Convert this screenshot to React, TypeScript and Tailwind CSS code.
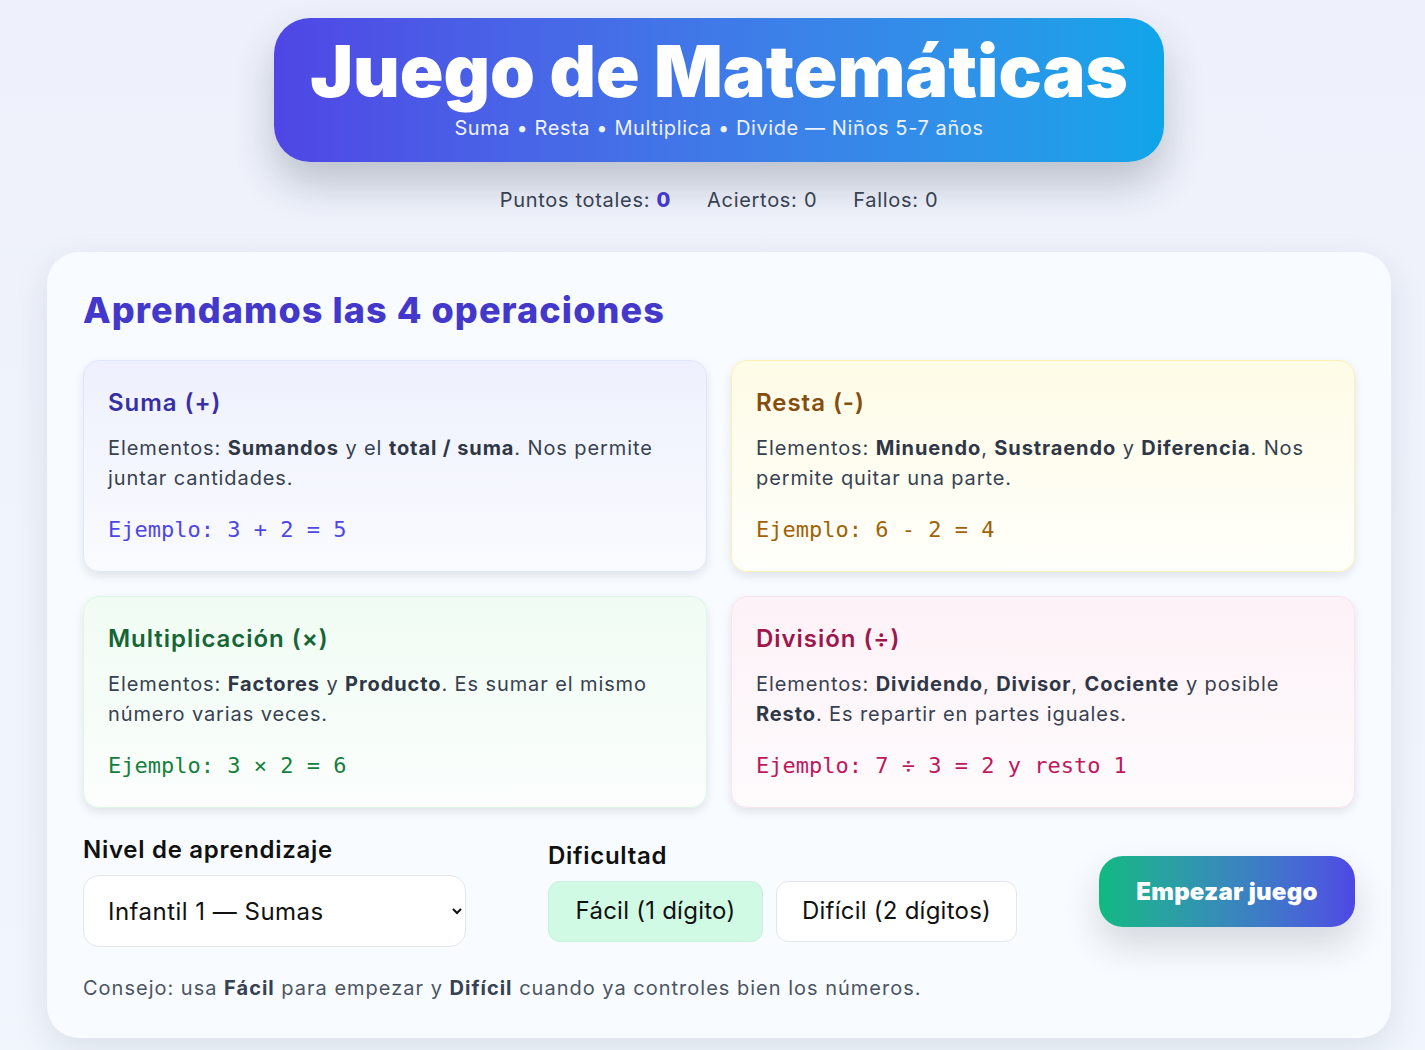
import { useState } from 'react';

type Op = {
  title: string;
  body: React.ReactNode;
  example: string;
  box: string;
  titleColor: string;
  exampleColor: string;
};

const ops: Op[] = [
  {
    title: 'Suma (+)',
    body: (
      <>
        Elementos: <b>Sumandos</b> y el <b>total / suma</b>. Nos permite juntar cantidades.
      </>
    ),
    example: 'Ejemplo: 3 + 2 = 5',
    box: 'bg-gradient-to-b from-[#eef1fd] to-[#fafbff] border-[#e0e6fb]',
    titleColor: 'text-[#3730a3]',
    exampleColor: 'text-[#4f46e5]',
  },
  {
    title: 'Resta (-)',
    body: (
      <>
        Elementos: <b>Minuendo</b>, <b>Sustraendo</b> y <b>Diferencia</b>. Nos permite quitar una parte.
      </>
    ),
    example: 'Ejemplo: 6 - 2 = 4',
    box: 'bg-gradient-to-b from-[#fefbe6] to-[#fffffb] border-[#fcf1b4]',
    titleColor: 'text-[#854d0e]',
    exampleColor: 'text-[#a16207]',
  },
  {
    title: 'Multiplicación (×)',
    body: (
      <>
        Elementos: <b>Factores</b> y <b>Producto</b>. Es sumar el mismo número varias veces.
      </>
    ),
    example: 'Ejemplo: 3 × 2 = 6',
    box: 'bg-gradient-to-b from-[#f0fcf3] to-[#fbfefd] border-[#dcf7e3]',
    titleColor: 'text-[#166534]',
    exampleColor: 'text-[#15803d]',
  },
  {
    title: 'División (÷)',
    body: (
      <>
        Elementos: <b>Dividendo</b>, <b>Divisor</b>, <b>Cociente</b> y posible <b>Resto</b>. Es repartir en
        partes iguales.
      </>
    ),
    example: 'Ejemplo: 7 ÷ 3 = 2 y resto 1',
    box: 'bg-gradient-to-b from-[#fdf2f7] to-[#fefbfd] border-[#fbe3ee]',
    titleColor: 'text-[#9d174d]',
    exampleColor: 'text-[#be185d]',
  },
];

function OpCard({ op }: { op: Op }) {
  return (
    <div className={`border rounded-[16px] px-6 pt-6 pb-[26px] shadow-[0_4px_10px_rgba(15,23,42,0.10)] ${op.box}`}>
      <h3 className={`text-[24px] leading-[36px] font-semibold tracking-[0.04em] ${op.titleColor}`}>{op.title}</h3>
      <p className="mt-3 text-[20px] leading-[30px] tracking-[0.045em] text-[#374151] [&_b]:font-bold [&_b]:text-[#2f3747]">
        {op.body}
      </p>
      <div className={`mt-[22px] text-[22px] leading-[30px] font-['DejaVu_Sans_Mono',monospace] ${op.exampleColor}`}>
        {op.example}
      </div>
    </div>
  );
}

export default function App() {
  const [level, setLevel] = useState('1');
  const [hard, setHard] = useState(false);

  return (
    <div className="min-h-screen bg-gradient-to-b from-[#eef1fb] to-[#f1f6fd] pl-[47px] pr-[34px] pt-[18px] pb-10 font-['Inter',sans-serif] text-[#111827]">
      <div className="flex justify-center">
        <div className="w-[890px] rounded-[36px] bg-gradient-to-r from-[#4f46e5] to-[#0ea5e9] pt-6 pb-5 text-center text-white shadow-[0_22px_40px_rgba(30,41,59,0.24)]">
          <h1 className="text-[72px] leading-[58px] font-black tracking-normal">Juego de Matemáticas</h1>
          <p className="mt-[14px] text-[20px] leading-[28px] tracking-[0.03em] text-[#eef2ff]">
            Suma • Resta • Multiplica • Divide — Niños 5-7 años
          </p>
        </div>
      </div>

      <div className="mt-6 flex justify-center gap-9 text-[20px] leading-[28px] tracking-[0.035em] text-[#374151]">
        <span>
          Puntos totales: <b className="font-extrabold text-[#4338ca]">0</b>
        </span>
        <span>Aciertos: 0</span>
        <span>Fallos: 0</span>
      </div>

      <div className="mt-[38px] rounded-[32px] bg-[#f8fbff] px-9 pt-9 pb-9 shadow-[0_12px_36px_rgba(30,41,59,0.10)]">
        <h2 className="text-[36px] leading-[44px] font-extrabold tracking-[0.03em] text-[#4338ca]">
          Aprendamos las 4 operaciones
        </h2>

        <div className="mt-[28px] grid grid-cols-2 gap-6">
          {ops.map((op) => (
            <OpCard key={op.title} op={op} />
          ))}
        </div>

        <div className="mt-[28px] flex items-center justify-between">
          <div className="w-[383px]">
            <label className="block text-[24px] leading-[28px] font-semibold tracking-[0.03em] text-[#111]">
              Nivel de aprendizaje
            </label>
            <select
              value={level}
              onChange={(e) => setLevel(e.target.value)}
              className="mt-[11px] h-[72px] w-full rounded-[16px] border border-[#e3e6ec] bg-white pl-5 pr-3 text-[24px] tracking-[0.02em] text-[#111]"
            >
              <option value="1">Infantil 1 — Sumas</option>
              <option value="2">Infantil 2 — Restas</option>
              <option value="3">Infantil 3 — Multiplica</option>
              <option value="4">Infantil 4 — Divide</option>
            </select>
          </div>

          <div className="w-[469px]">
            <div className="text-[24px] leading-[28px] font-semibold tracking-[0.03em] text-[#111]">Dificultad</div>
            <div className="mt-[11px] flex gap-[13px]">
              <button
                onClick={() => setHard(false)}
                className={`h-[61px] w-[215px] rounded-[12px] border text-[24px] tracking-[0.01em] text-[#111] ${
                  !hard ? 'bg-[#d1fae5] border-[#c9f0dc]' : 'bg-white border-[#e3e6ec]'
                }`}
              >
                Fácil (1 dígito)
              </button>
              <button
                onClick={() => setHard(true)}
                className={`h-[61px] w-[241px] rounded-[12px] border text-[24px] tracking-[0.01em] text-[#111] ${
                  hard ? 'bg-[#d1fae5] border-[#c9f0dc]' : 'bg-white border-[#e3e6ec]'
                }`}
              >
                Difícil (2 dígitos)
              </button>
            </div>
          </div>

          <button className="h-[71px] w-[256px] rounded-[24px] bg-gradient-to-r from-[#10b981] to-[#4f46e5] text-[24px] font-black tracking-[0.01em] text-white shadow-[0_18px_36px_rgba(30,41,59,0.16)]">
            Empezar juego
          </button>
        </div>

        <p className="mt-[27px] text-[20px] leading-[28px] tracking-[0.05em] text-[#4b5563] [&_b]:font-bold [&_b]:text-[#374151]">
          Consejo: usa <b>Fácil</b> para empezar y <b>Difícil</b> cuando ya controles bien los números.
        </p>
      </div>
    </div>
  );
}
